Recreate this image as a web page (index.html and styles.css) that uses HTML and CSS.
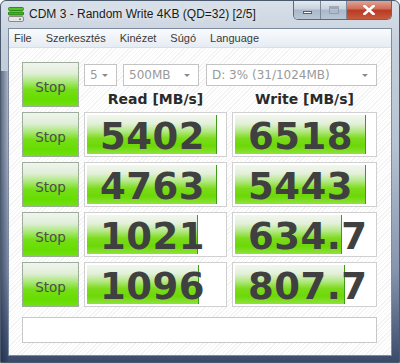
FILE: index.html
```html
<!DOCTYPE html>
<html lang="hu">
    <head>
        <meta charset="UTF-8" />
        <title>CDM 3 - Random Write 4KB (QD=32) [2/5]</title>
        <link rel="stylesheet" href="styles.css">
    </head>
    <body>
        <div class="window">
            <div class="titlebar">
                <svg class="app-icon" width="16" height="15" viewBox="0 0 16 15">
                    <rect x="0.5" y="0.5" width="15" height="3" rx="1" fill="#4cc52a" stroke="#2f8a18" stroke-width="1" />
                    <rect x="0.5" y="5" width="15" height="3" rx="1" fill="#3fb320" stroke="#2a7a14" stroke-width="1" />
                    <rect x="0.5" y="9.5" width="15" height="5" rx="1.5" fill="#e6e6e6" stroke="#8a8a8a" stroke-width="1" />
                    <rect x="11" y="11.5" width="2" height="1.5" fill="#38b020" />
                </svg>
                <span class="title">CDM 3 - Random Write 4KB (QD=32) [2/5]</span>
                <div class="caption-btns">
                    <span class="cap-btn cap-min"><i></i></span>
                    <span class="cap-btn cap-max"><i></i></span>
                    <span class="cap-btn cap-close">
                        <svg width="12" height="10" viewBox="0 0 12 10">
                            <path d="M1.5 1 L10.5 9 M10.5 1 L1.5 9" stroke="#fff" stroke-width="2.6" stroke-linecap="square" />
                        </svg>
                    </span>
                </div>
            </div>

            <div class="client">
                <ul class="menubar">
                    <li>File</li>
                    <li>Szerkesztés</li>
                    <li>Kinézet</li>
                    <li>Súgó</li>
                    <li>Language</li>
                </ul>

                <div class="main">
                    <div class="board">
                        <div class="stop-btn">Stop</div>
                        <div class="top-panel">
                            <div class="combos">
                                <div class="combo combo-count">5</div>
                                <div class="combo combo-size">500MB</div>
                                <div class="combo combo-drive">D: 3% (31/1024MB)</div>
                            </div>
                            <div class="headers">
                                <span>Read [MB/s]</span>
                                <span>Write [MB/s]</span>
                            </div>
                        </div>

                        <div class="stop-btn">Stop</div>
                        <div class="meter" style="--fill: 95%">5402</div>
                        <div class="meter" style="--fill: 94%">6518</div>

                        <div class="stop-btn">Stop</div>
                        <div class="meter" style="--fill: 95%">4763</div>
                        <div class="meter" style="--fill: 94%">5443</div>

                        <div class="stop-btn">Stop</div>
                        <div class="meter" style="--fill: 81%">1021</div>
                        <div class="meter" style="--fill: 77%">634.7</div>

                        <div class="stop-btn">Stop</div>
                        <div class="meter" style="--fill: 82%">1096</div>
                        <div class="meter" style="--fill: 79%">807.7</div>
                    </div>

                    <div class="comment"></div>
                </div>
            </div>
        </div>
    </body>
</html>
```

FILE: styles.css
```css
* {
    box-sizing: border-box;
}

body {
    margin: 0;
    width: 400px;
    height: 363px;
    overflow: hidden;
    background: #ffffff;
}

/* ablak keret */
.window {
    width: 400px;
    height: 363px;
    display: flex;
    flex-direction: column;
    padding: 0 7px 6px 7px;
    border: 1px solid #4b596c;
    border-radius: 6px 6px 0 0;
    background:
        linear-gradient(to right, rgba(20, 32, 64, 0.55) 0px, rgba(20, 32, 64, 0.2) 6px, transparent 8px) 0 70px / 100% 100% no-repeat,
        linear-gradient(
            #d8e0e9 0%,
            #c6d0dc 12%,
            #b6c3d2 40%,
            #8594ad 75%,
            #3a4a6a 100%
        );
}

.titlebar {
    height: 27px;
    display: flex;
    align-items: flex-start;
}

.app-icon {
    margin: 6px 5px 0 0;
}

.title {
    margin-top: 6px;
    font-family: "Liberation Sans", sans-serif;
    font-size: 12px;
    color: #1a1a1a;
    text-shadow: 0 0 6px rgba(255, 255, 255, 0.9);
}

.caption-btns {
    margin-left: auto;
    display: flex;
    height: 19px;
    border: 1px solid #5a6a80;
    border-top: none;
    border-radius: 0 0 5px 5px;
    overflow: hidden;
}

.cap-btn {
    display: flex;
    align-items: center;
    justify-content: center;
    height: 18px;
    border-left: 1px solid #7a889a;
}

.cap-min,
.cap-max {
    width: 26px;
    background: linear-gradient(#e3e9f0 0%, #c7d2de 45%, #a9b8c9 50%, #b9c6d4 100%);
}

.cap-min {
    border-left: none;
}

.cap-min i {
    display: block;
    width: 9px;
    height: 3px;
    margin-top: 5px;
    background: #fff;
    border: 1px solid #55606e;
}

.cap-max i {
    display: block;
    width: 10px;
    height: 8px;
    border: 1px solid #7f8a98;
    border-top-width: 3px;
    background: transparent;
    opacity: 0.6;
}

.cap-close {
    width: 45px;
    background: linear-gradient(#e0a496 0%, #cf6a55 45%, #b83a22 50%, #c75a3c 100%);
}

/* kliens terület */
.client {
    flex: 1;
    display: flex;
    flex-direction: column;
    border: 1px solid #7d8ba0;
    background: repeating-linear-gradient(
        135deg,
        #ffffff 0px,
        #ffffff 2px,
        #f3f3f3 2px,
        #f3f3f3 3px
    );
}

.menubar {
    display: flex;
    margin: 0;
    padding: 0;
    height: 19px;
    list-style: none;
    align-items: center;
    background: linear-gradient(#f9fbfd, #e6ecf3);
    border-bottom: 1px solid #d7dee8;
    font-family: "Liberation Sans", sans-serif;
    font-size: 11px;
    color: #3a3a3a;
}

.menubar li {
    padding: 0 7px;
}

.menubar li:first-child {
    padding-left: 5px;
}

.main {
    padding: 14px 14px 0 13px;
}

.board {
    display: grid;
    grid-template-columns: 57px 143px 145px;
    grid-auto-rows: 45px;
    column-gap: 5px;
    row-gap: 5px;
}

.stop-btn {
    display: flex;
    align-items: center;
    justify-content: center;
    padding-top: 4px;
    border: 1px solid #9fae9c;
    background: linear-gradient(
        #f1f4ef 0%,
        #dfeed6 25%,
        #a6e872 45%,
        #74df16 62%,
        #66dd00 85%,
        #74e014 100%
    );
    font-family: "DejaVu Sans", sans-serif;
    font-size: 13.5px;
    color: #4e4e4e;
}

.top-panel {
    grid-column: 2 / 4;
    display: flex;
    flex-direction: column;
}

.combos {
    display: flex;
    margin-top: 2px;
    height: 22px;
}

.combo {
    position: relative;
    display: flex;
    align-items: center;
    padding-left: 5px;
    border: 1px solid #c4c4c4;
    background: #fff;
    font-family: "DejaVu Sans", sans-serif;
    font-size: 12px;
    color: #999;
}

.combo::after {
    content: "";
    position: absolute;
    right: 8px;
    top: 9px;
    border-left: 3px solid transparent;
    border-right: 3px solid transparent;
    border-top: 3px solid #8a8a8a;
}

.combo-count {
    width: 33px;
}

.combo-size {
    width: 76px;
    margin-left: 6px;
}

.combo-drive {
    width: 171px;
    margin-left: 7px;
}

.headers {
    display: grid;
    grid-template-columns: 143px 145px;
    column-gap: 5px;
    margin-top: 5px;
    font-family: "DejaVu Sans", sans-serif;
    font-weight: bold;
    font-size: 14px;
    color: #2a2a2a;
    text-align: center;
}

/* mérő cellák */
.meter {
    display: flex;
    align-items: center;
    padding: 3px 2px 0 15px;
    border: 1px solid #d0d0d0;
    background:
        linear-gradient(
            to right,
            transparent calc(var(--fill) - 1px),
            #3f9c18 calc(var(--fill) - 1px),
            #3f9c18 var(--fill),
            transparent var(--fill)
        ) 2px 2px / calc(100% - 4px) calc(100% - 4px) no-repeat,
        linear-gradient(
            #f3f6f0 0%,
            #e3f0da 22%,
            #b2e882 42%,
            #7cdb1c 60%,
            #6cd806 80%,
            #8fe23e 100%
        ) 2px 2px / calc((100% - 4px) * var(--fill) / 100%) calc(100% - 4px) no-repeat,
        #ffffff;
    font-family: "DejaVu Sans", sans-serif;
    font-weight: bold;
    font-size: 37px;
    letter-spacing: 0.5px;
    color: #404040;
    line-height: 1;
}

.comment {
    margin-top: 10px;
    height: 26px;
    border: 1px solid #c8c8c8;
    background: #fff;
}
```
